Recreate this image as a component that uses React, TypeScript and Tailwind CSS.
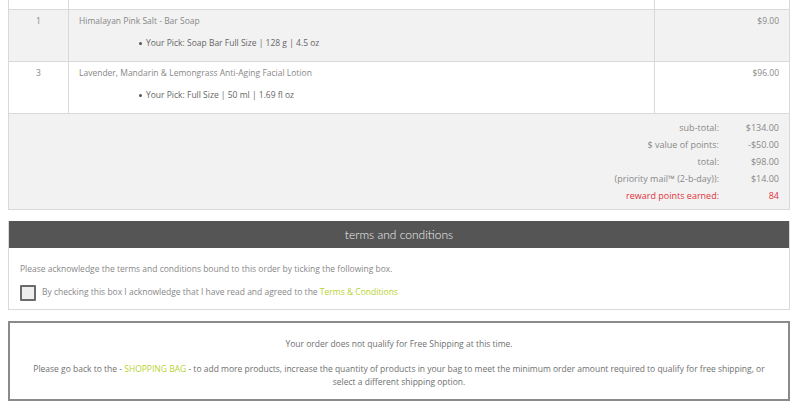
import React from 'react';

const items = [
  { qty: 1, name: 'Himalayan Pink Salt - Bar Soap', pick: 'Your Pick: Soap Bar Full Size | 128 g | 4.5 oz', price: '$9.00', shade: true },
  { qty: 3, name: 'Lavender, Mandarin & Lemongrass Anti-Aging Facial Lotion', pick: 'Your Pick: Full Size | 50 ml | 1.69 fl oz', price: '$96.00', shade: false },
];

const totals = [
  { label: 'sub-total:', value: '$134.00' },
  { label: '$ value of points:', value: '-$50.00' },
  { label: 'total:', value: '$98.00' },
  { label: '(priority mail™ (2-b-day)):', value: '$14.00' },
];

export default function App() {
  return (
    <div className="w-[800px] h-[410px] overflow-hidden bg-white text-[8.5px] text-[#888888]" style={{ fontFamily: '"Open Sans", sans-serif' }}>
      <div className="ml-[8px] w-[782px] border-x border-b border-[#d9d9d9]">
        {/* cut-off row above */}
        <div className="grid grid-cols-[60px_586px_1fr] h-[10px] border-b border-[#d9d9d9]">
          <div className="border-r border-[#d9d9d9]" />
          <div className="border-r border-[#d9d9d9]" />
          <div />
        </div>

        {items.map((it) => (
          <div
            key={it.qty}
            className={`grid grid-cols-[60px_586px_1fr] h-[52px] border-b border-[#d9d9d9] ${it.shade ? 'bg-[#f2f2f2]' : 'bg-white'}`}
          >
            <div className="border-r border-[#d9d9d9] text-center pt-[5px]">{it.qty}</div>
            <div className="border-r border-[#d9d9d9] pl-[10px] pt-[5px]">
              <p>{it.name}</p>
              <ul className="mt-[9px] pl-[60px]">
                <li className="flex items-center gap-[4px]">
                  <span className="w-[3px] h-[3px] rounded-full bg-[#555]" />
                  <span className="text-[#666]">{it.pick}</span>
                </li>
              </ul>
            </div>
            <div className="text-right pr-[10px] pt-[5px]">{it.price}</div>
          </div>
        ))}

        {/* summary */}
        <div className="bg-[#f2f2f2] h-[95px] pt-[5px] pr-[10px] flex flex-col items-end text-[9px]">
          {totals.map((t) => (
            <div key={t.label} className="flex h-[17px] items-center">
              <span className="text-right">{t.label}</span>
              <span className="w-[60px] text-right">{t.value}</span>
            </div>
          ))}
          <div className="flex h-[17px] items-center text-[#e0323c]">
            <span className="text-right">reward points earned:</span>
            <span className="w-[60px] text-right">84</span>
          </div>
        </div>
      </div>

      {/* terms and conditions */}
      <div className="ml-[8px] w-[782px] mt-[11px] border-x border-b border-[#d9d9d9]">
        <div className="bg-[#555555] h-[27px] flex items-center justify-center text-[12px] text-[#f0f0f0]" style={{ fontFamily: 'Lato, sans-serif', fontWeight: 300 }}>
          terms and conditions
        </div>
        <div className="px-[11px] pt-[15px] pb-[8px]">
          <p>Please acknowledge the terms and conditions bound to this order by ticking the following box.</p>
          <label className="flex items-center gap-[6px] mt-[9px]">
            <span className="w-[16px] h-[16px] border-2 border-[#6b6b6b] bg-[#eeeeee] rounded-[1px]" />
            <span>
              By checking this box I acknowledge that I have read and agreed to the{' '}
              <span className="text-[#b7d332]">Terms &amp; Conditions</span>
            </span>
          </label>
        </div>
      </div>

      {/* free shipping notice */}
      <div className="ml-[8px] w-[782px] mt-[11px] h-[80px] border-2 border-[#8a8a8a] text-center text-[#707070] pt-[15px] px-[14px]">
        <p>Your order does not qualify for Free Shipping at this time.</p>
        <p className="mt-[11px] leading-[13px]">
          Please go back to the - <span className="text-[#b7d332]">SHOPPING BAG</span> - to add more products, increase the quantity of products in your bag to meet the minimum order amount required to qualify for free shipping, or select a different shipping option.
        </p>
      </div>
    </div>
  );
}
